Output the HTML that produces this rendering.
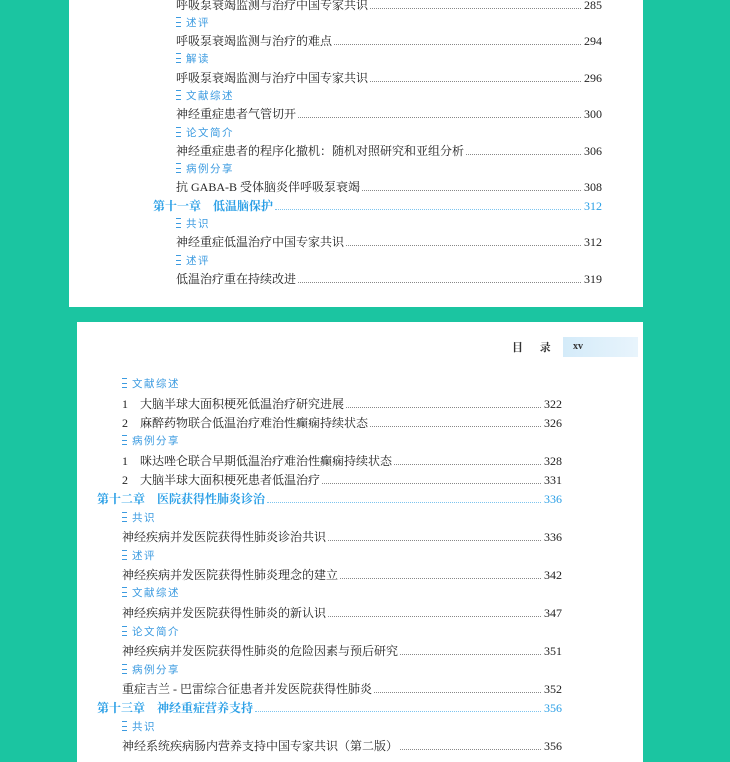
<!DOCTYPE html>
<html><head><meta charset="utf-8"><style>
body{margin:0;width:730px;height:750px;background:#1bc5a1;position:relative;overflow:hidden;font-family:"Liberation Serif","Noto Serif CJK SC",serif;}
.pg{position:absolute;background:#fff;}
.l{position:absolute;height:16px;line-height:16px;font-size:12px;color:#222;display:flex;white-space:nowrap;}
.l .d{flex:1;border-bottom:1px dotted #888;margin:0 3px 4px 2px;}
.c{color:#2a9fe6;font-weight:bold;}
.c .d{border-color:#7cc4ef;}
.c .n{font-weight:normal;}
.s{position:absolute;font-size:10.5px;color:#3c9be0;line-height:14px;font-family:"Noto Sans CJK SC",sans-serif;letter-spacing:1.5px;}
.s:before{content:"";display:inline-block;width:5px;height:8px;border:1px solid #3c9be0;border-width:1px 0;margin-right:5px;background:linear-gradient(#3c9be0,#3c9be0) center/5px 1px no-repeat;vertical-align:-1px;}
</style></head><body>
<div class="pg" style="left:69px;top:0;width:574px;height:307px"></div>
<div class="pg" style="left:77px;top:322px;width:566px;height:440px"></div>

<div class="l" style="left:176px;top:-3px;width:426px">呼吸泵衰竭监测与治疗中国专家共识<span class="d"></span><span>285</span></div>
<div class="s" style="left:176px;top:16px">述评</div>
<div class="l" style="left:176px;top:33px;width:426px">呼吸泵衰竭监测与治疗的难点<span class="d"></span><span>294</span></div>
<div class="s" style="left:176px;top:52px">解读</div>
<div class="l" style="left:176px;top:70px;width:426px">呼吸泵衰竭监测与治疗中国专家共识<span class="d"></span><span>296</span></div>
<div class="s" style="left:176px;top:89px">文献综述</div>
<div class="l" style="left:176px;top:106px;width:426px">神经重症患者气管切开<span class="d"></span><span>300</span></div>
<div class="s" style="left:176px;top:126px">论文简介</div>
<div class="l" style="left:176px;top:143px;width:426px">神经重症患者的程序化撤机：随机对照研究和亚组分析<span class="d"></span><span>306</span></div>
<div class="s" style="left:176px;top:162px">病例分享</div>
<div class="l" style="left:176px;top:179px;width:426px">抗 GABA-B 受体脑炎伴呼吸泵衰竭<span class="d"></span><span>308</span></div>
<div class="l c" style="left:153px;top:198px;width:449px">第十一章　低温脑保护<span class="d"></span><span class="n">312</span></div>
<div class="s" style="left:176px;top:217px">共识</div>
<div class="l" style="left:176px;top:234px;width:426px">神经重症低温治疗中国专家共识<span class="d"></span><span>312</span></div>
<div class="s" style="left:176px;top:254px">述评</div>
<div class="l" style="left:176px;top:271px;width:426px">低温治疗重在持续改进<span class="d"></span><span>319</span></div>

<div style="position:absolute;left:512px;top:339px;font-size:11px;font-weight:bold;color:#333;word-spacing:14px">目 录</div>
<div style="position:absolute;left:563px;top:337px;width:75px;height:20px;background:linear-gradient(90deg,#d4ebf9,#e8f4fc);font-size:10px;font-weight:bold;line-height:20px;color:#333;padding-left:10px;box-sizing:border-box">xv</div>

<div class="s" style="left:122px;top:377px">文献综述</div>
<div class="l" style="left:122px;top:396px;width:440px">1　大脑半球大面积梗死低温治疗研究进展<span class="d"></span><span>322</span></div>
<div class="l" style="left:122px;top:415px;width:440px">2　麻醉药物联合低温治疗难治性癫痫持续状态<span class="d"></span><span>326</span></div>
<div class="s" style="left:122px;top:434px">病例分享</div>
<div class="l" style="left:122px;top:453px;width:440px">1　咪达唑仑联合早期低温治疗难治性癫痫持续状态<span class="d"></span><span>328</span></div>
<div class="l" style="left:122px;top:472px;width:440px">2　大脑半球大面积梗死患者低温治疗<span class="d"></span><span>331</span></div>
<div class="l c" style="left:97px;top:491px;width:465px">第十二章　医院获得性肺炎诊治<span class="d"></span><span class="n">336</span></div>
<div class="s" style="left:122px;top:511px">共识</div>
<div class="l" style="left:122px;top:529px;width:440px">神经疾病并发医院获得性肺炎诊治共识<span class="d"></span><span>336</span></div>
<div class="s" style="left:122px;top:549px">述评</div>
<div class="l" style="left:122px;top:567px;width:440px">神经疾病并发医院获得性肺炎理念的建立<span class="d"></span><span>342</span></div>
<div class="s" style="left:122px;top:586px">文献综述</div>
<div class="l" style="left:122px;top:605px;width:440px">神经疾病并发医院获得性肺炎的新认识<span class="d"></span><span>347</span></div>
<div class="s" style="left:122px;top:625px">论文简介</div>
<div class="l" style="left:122px;top:643px;width:440px">神经疾病并发医院获得性肺炎的危险因素与预后研究<span class="d"></span><span>351</span></div>
<div class="s" style="left:122px;top:663px">病例分享</div>
<div class="l" style="left:122px;top:681px;width:440px">重症吉兰 - 巴雷综合征患者并发医院获得性肺炎<span class="d"></span><span>352</span></div>
<div class="l c" style="left:97px;top:700px;width:465px">第十三章　神经重症营养支持<span class="d"></span><span class="n">356</span></div>
<div class="s" style="left:122px;top:720px">共识</div>
<div class="l" style="left:122px;top:738px;width:440px">神经系统疾病肠内营养支持中国专家共识（第二版）<span class="d"></span><span>356</span></div>
</body></html>
